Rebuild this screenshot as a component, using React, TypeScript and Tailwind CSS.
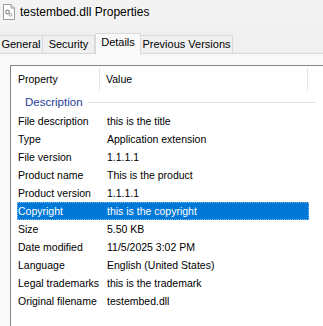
import React from "react";

const rows: [string, string][] = [
  ["File description", "this is the title"],
  ["Type", "Application extension"],
  ["File version", "1.1.1.1"],
  ["Product name", "This is the product"],
  ["Product version", "1.1.1.1"],
  ["Copyright", "this is the copyright"],
  ["Size", "5.50 KB"],
  ["Date modified", "11/5/2025 3:02 PM"],
  ["Language", "English (United States)"],
  ["Legal trademarks", "this is the trademark"],
  ["Original filename", "testembed.dll"],
];

const FileIcon = () => (
  <svg width="14" height="16" viewBox="0 0 14 16">
    <path d="M1.5 0.5 H9 L12.5 4 V15.5 H1.5 Z" fill="#ffffff" stroke="#9a9a9a" />
    <path d="M9 0.5 V4 H12.5" fill="#e8e8e8" stroke="#9a9a9a" />
    <circle cx="5.5" cy="8" r="1.8" fill="none" stroke="#8a8a8a" strokeWidth="1.2" />
    <circle cx="8.5" cy="10.8" r="1.4" fill="none" stroke="#a0a0a0" strokeWidth="1" />
  </svg>
);

const App = () => {
  return (
    <div className="w-[323px] h-[326px] overflow-hidden bg-[#f0f0f0] flex flex-col font-['Liberation_Sans',Arial,sans-serif] text-black">
      {/* title */}
      <div className="h-[24px] flex items-center pl-[2px] gap-[4px] bg-[#f3f3f3]">
        <FileIcon />
        <span className="text-[12px] leading-none">testembed.dll Properties</span>
      </div>

      {/* tabs */}
      <div className="h-[29px] flex items-end text-[11px]">
        <div className="w-[44px] h-[18px] flex items-center justify-center border border-b-0 border-[#d9d9d9] -ml-px">
          General
        </div>
        <div className="w-[52px] h-[18px] flex items-center justify-center border border-b-0 border-l-0 border-[#d9d9d9]">
          Security
        </div>
        <div className="w-[46px] h-[21px] pb-[3px] flex items-center justify-center border border-b-0 border-[#d9d9d9] bg-[#f9f9f9] -mb-px relative z-10">
          Details
        </div>
        <div className="w-[92px] h-[18px] flex items-center justify-center border border-b-0 border-l-0 border-[#d9d9d9]">
          Previous Versions
        </div>
      </div>

      {/* panel */}
      <div className="flex-1 border-t border-[#d9d9d9] bg-[#f9f9f9] pl-[10px] pt-[11px] flex">
        <div className="flex-1 bg-white border-l border-t border-[#828790] text-[10.5px] leading-none">
          {/* header */}
          <div className="h-[27px] flex items-center">
            <div className="w-[89px] h-[23px] pl-[7px] flex items-center border-r border-[#e5e5e5]">Property</div>
            <div className="w-[208px] h-[23px] pl-[6px] flex items-center border-r border-[#e5e5e5]">Value</div>
          </div>

          {/* group */}
          <div className="h-[19px] flex items-center pl-[14px] pr-[7px] gap-[5px]">
            <span className="text-[11.5px] text-[#1e3d98]">Description</span>
            <div className="flex-1 h-px bg-[#e2e2e2]" />
          </div>

          {rows.map(([k, v]) => {
            const selected = k === "Copyright";
            return (
              <div
                key={k}
                className={
                  selected
                    ? "h-[18px] ml-[6px] w-[292px] pl-px flex items-center bg-[#0078d7] text-white outline-1 outline-dotted outline-offset-[-1px] outline-[#7fb6e8]"
                    : "h-[18px] ml-[6px] w-[292px] pl-px flex items-center"
                }
              >
                <span className="w-[89px] whitespace-nowrap">{k}</span>
                <span className="whitespace-nowrap">{v}</span>
              </div>
            );
          })}
        </div>
      </div>
    </div>
  );
};

export default App;
